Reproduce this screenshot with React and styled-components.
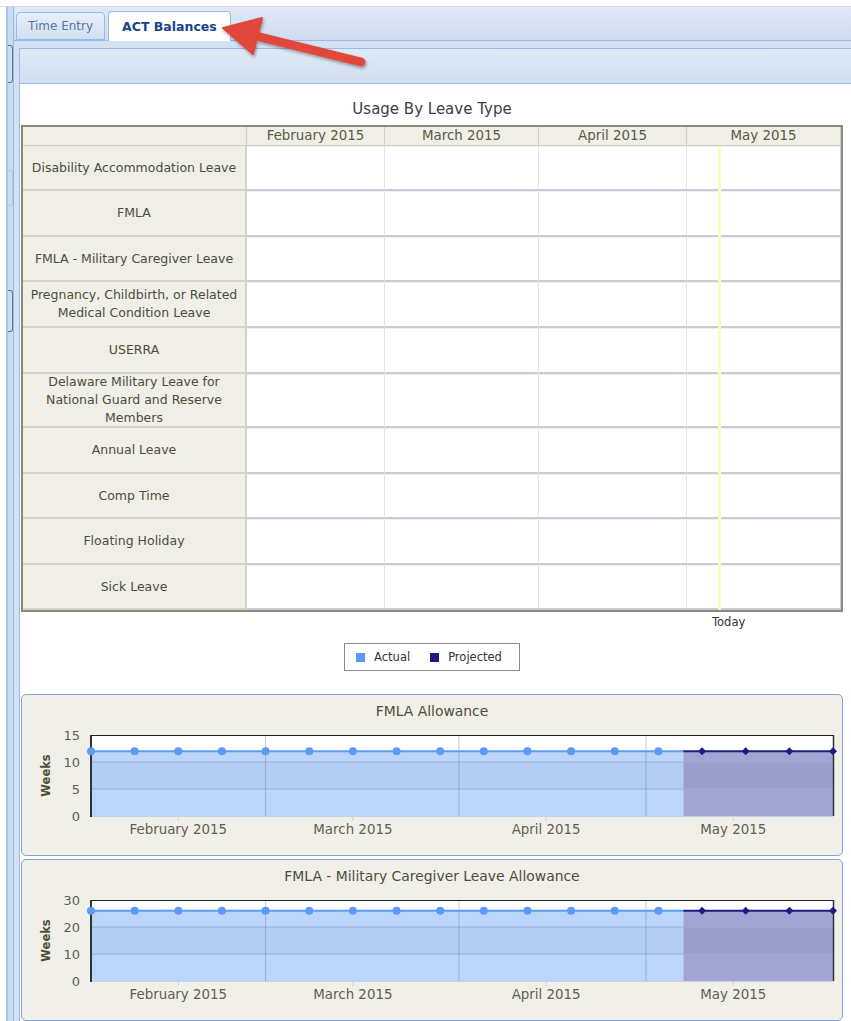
import React from 'react';
import styled, { createGlobalStyle } from 'styled-components';

const GlobalStyle = createGlobalStyle`
  html, body {
    margin: 0;
    padding: 0;
    background: #fff;
  }
  body {
    font-family: "DejaVu Sans", Verdana, sans-serif;
    color: #4d4d3a;
  }
`;

const Page = styled.div`
  position: relative;
  width: 851px;
  height: 1021px;
  overflow: hidden;
`;

const Frame = styled.div`
  display: flex;
  margin-top: 6px;
  border-top: 1px solid #d6d6d6;
  height: 1014px;
`;

const SideRail = styled.div`
  flex: none;
  width: 14px;
  display: flex;
  flex-direction: column;
  background: linear-gradient(
    to right,
    #fff 0 6px,
    #a9c4e8 6px 8px,
    #c9dcf3 8px 13px,
    #99bbe8 13px 14px
  );
`;

const Handle = styled.div`
  flex: none;
  margin-top: ${p => p.$gap}px;
  height: ${p => p.$size}px;
  width: 4px;
  margin-left: 8px;
  border: 1px solid ${p => (p.$faint ? '#b7c6d8' : '#6d7480')};
  border-left: none;
  border-radius: 0 3px 3px 0;
`;

const TabPanel = styled.div`
  flex: 1;
  display: flex;
  flex-direction: column;
  background: #d3e1f3;
  min-width: 0;
`;

const TabStrip = styled.div`
  height: 33px;
  display: flex;
  align-items: flex-end;
  gap: 3px;
  padding-left: 2px;
  background: linear-gradient(#dfe8f6, #cfdcef);
  border-bottom: 1px solid #99bbe8;
`;

const Tab = styled.div`
  height: ${p => (p.$active ? 30 : 28)}px;
  margin-bottom: ${p => (p.$active ? -1 : 0)}px;
  box-sizing: border-box;
  padding: 0 ${p => (p.$active ? 13 : 11)}px;
  display: flex;
  align-items: center;
  border: 1px solid #99bbe8;
  border-bottom: ${p => (p.$active ? 'none' : '1px solid #99bbe8')};
  border-radius: 4px 4px 0 0;
  background: ${p => (p.$active ? '#fff' : 'linear-gradient(#e6eef9, #d3e0f2)')};
  color: ${p => (p.$active ? '#15428b' : '#5a76a0')};
  font-size: ${p => (p.$active ? 12.5 : 12)}px;
  font-weight: ${p => (p.$active ? 700 : 400)};
  white-space: nowrap;
`;

const Body = styled.div`
  flex: 1;
  margin: 7px 0 0 5px;
  border-top: 1px solid #99bbe8;
  border-left: 1px solid #99bbe8;
  display: flex;
  flex-direction: column;
  min-height: 0;
`;

const Toolbar = styled.div`
  height: 34px;
  flex: none;
  background: linear-gradient(#dfe9f6, #d0def0);
  border-bottom: 1px solid #99bbe8;
`;

const Content = styled.div`
  flex: 1;
  background: #fff;
  padding: 0 8px 0 1px;
`;

const SectionTitle = styled.div`
  height: 41px;
  box-sizing: border-box;
  padding-top: 15px;
  line-height: 20px;
  text-align: center;
  font-size: 15px;
  color: #404040;
`;

const Table = styled.div`
  position: relative;
  display: grid;
  grid-template-columns: 224px 138px 154px 148px 154px;
  border: 2px solid #8b8b7b;
  font-size: 12.5px;
`;

const HeadCell = styled.div`
  height: 19px;
  box-sizing: border-box;
  line-height: 18px;
  text-align: center;
  background: #efefe8;
  border-right: 1px solid #cdcdc2;
  border-bottom: 1px solid #cdcdc2;
  font-size: 13.4px;
  color: #5a5a44;
  &:last-child { border-right: none; }
`;

const LabelCell = styled.div`
  height: ${p => p.$h}px;
  box-sizing: border-box;
  padding: 0 4px;
  display: flex;
  align-items: center;
  justify-content: center;
  text-align: center;
  line-height: 18px;
  background: #efefe8;
  border-right: 2px solid #d2d2c9;
  border-bottom: 2px solid #d2d2c9;
  color: #4d4d3a;
`;

const DataCell = styled.div`
  height: ${p => p.$h}px;
  box-sizing: border-box;
  background: #fff;
  border-top: 1px solid #f0f0f0;
  border-right: ${p => (p.$last ? '1px solid #c8cfd9' : '1px solid #e2e2e2')};
  border-bottom: 2px solid #c6cdd8;
`;

const TodayLine = styled.div`
  position: absolute;
  left: 695px;
  top: 19px;
  bottom: 0;
  width: 3px;
  background: #fbfbc4;
`;

const TodayLabel = styled.div`
  height: 22px;
  padding-left: 691px;
  line-height: 20px;
  font-size: 11.5px;
  color: #333;
`;

const LegendRow = styled.div`
  display: flex;
  justify-content: center;
  margin-top: 9px;
`;

const Legend = styled.div`
  display: flex;
  align-items: center;
  gap: 20px;
  height: 28px;
  box-sizing: border-box;
  padding: 0 17px 0 11px;
  border: 1px solid #8e8e80;
  font-size: 11.5px;
  color: #333;
`;

const LegendItem = styled.div`
  display: flex;
  align-items: center;
  gap: 9px;
`;

const Swatch = styled.span`
  width: 9px;
  height: 9px;
  background: ${p => p.$color};
`;

const Charts = styled.div`
  display: flex;
  flex-direction: column;
  gap: 3px;
  margin-top: 23px;
`;

const ChartPanel = styled.div`
  width: 822px;
  height: 162px;
  box-sizing: border-box;
  border: 1px solid #7fa4d5;
  border-radius: 5px;
  background: #f0f0e9;
  overflow: hidden;
`;

const ChartTitle = styled.div`
  height: 27px;
  box-sizing: border-box;
  padding-top: 6px;
  line-height: 21px;
  text-align: center;
  font-size: 13.9px;
  color: #4d4d3a;
`;

const ArrowLayer = styled.svg`
  position: absolute;
  left: 0;
  top: 0;
  pointer-events: none;
`;

const months = ['February 2015', 'March 2015', 'April 2015', 'May 2015'];

const leaveTypes = [
  { label: 'Disability Accommodation Leave', h: 45 },
  { label: 'FMLA', h: 46 },
  { label: 'FMLA - Military Caregiver Leave', h: 45 },
  { label: 'Pregnancy, Childbirth, or Related Medical Condition Leave', h: 46 },
  { label: 'USERRA', h: 46 },
  { label: 'Delaware Military Leave for National Guard and Reserve Members', h: 54 },
  { label: 'Annual Leave', h: 46 },
  { label: 'Comp Time', h: 45 },
  { label: 'Floating Holiday', h: 46 },
  { label: 'Sick Leave', h: 45 },
];

const ACTUAL = '#5b9bf8';
const PROJECTED = '#1c1c84';

// Feb 1 .. May 31, 2015 as day offsets
const LAST_DAY = 119;
const TODAY = 95;
const MONTH_STARTS = [28, 59, 89];
const MONTH_MIDS = [14, 42, 73, 103];

function AllowanceChart({ title, max, step, value }) {
  const X0 = 69;
  const X1 = 811;
  const TOP = 13;
  const BOTTOM = 94;
  const xOf = d => X0 + (d * (X1 - X0)) / LAST_DAY;
  const yOf = v => BOTTOM - (v * (BOTTOM - TOP)) / max;
  const ticks = [];
  for (let v = 0; v <= max; v += step) ticks.push(v);
  const weeks = [];
  for (let d = 0; d <= LAST_DAY; d += 7) weeks.push(d);
  const xToday = xOf(TODAY);
  const yVal = yOf(value);

  return (
    <ChartPanel>
      <ChartTitle>{title}</ChartTitle>
      <svg width="820" height="133" style={{ display: 'block' }}>
        <rect x={X0} y={TOP} width={X1 - X0} height={BOTTOM - TOP} fill="#fff" />
        <rect x={X0} y={yVal} width={xToday - X0} height={BOTTOM - yVal} fill="#bcd5fb" />
        <rect x={xToday} y={yVal} width={X1 - xToday} height={BOTTOM - yVal} fill="#a2a4d3" />
        <rect
          x={X0}
          y={yOf(step * 2)}
          width={X1 - X0}
          height={yOf(step) - yOf(step * 2)}
          fill="rgba(40, 50, 70, 0.05)"
        />
        {ticks.slice(1, -1).map(v => (
          <line key={v} x1={X0} x2={X1} y1={yOf(v)} y2={yOf(v)} stroke="#98afd6" strokeWidth="1" />
        ))}
        {MONTH_STARTS.map(d => (
          <line key={d} x1={xOf(d)} x2={xOf(d)} y1={TOP} y2={BOTTOM} stroke="rgba(90, 110, 150, 0.35)" strokeWidth="1" />
        ))}
        <line x1={X0} x2={X1} y1={BOTTOM + 0.5} y2={BOTTOM + 0.5} stroke="#c4d3e6" />
        {MONTH_MIDS.map(d => (
          <line key={d} x1={xOf(d)} x2={xOf(d)} y1={BOTTOM} y2={BOTTOM + 5} stroke="#c4d3e6" />
        ))}
        <line x1={X0} x2={X1} y1={TOP + 0.5} y2={TOP + 0.5} stroke="#222" />
        <line x1={X1 + 0.5} x2={X1 + 0.5} y1={TOP} y2={BOTTOM} stroke="#333" strokeWidth="1.5" />
        <line x1={X0} x2={X0} y1={TOP} y2={BOTTOM + 1} stroke="#333" strokeWidth="2" />
        <line x1={X0} x2={xToday} y1={yVal} y2={yVal} stroke={ACTUAL} strokeWidth="2" />
        <line x1={xToday} x2={X1} y1={yVal} y2={yVal} stroke={PROJECTED} strokeWidth="2" />
        {weeks.map(d =>
          d < TODAY ? (
            <circle key={d} cx={xOf(d)} cy={yVal} r="4" fill={ACTUAL} />
          ) : (
            <path
              key={d}
              d={`M${xOf(d)} ${yVal - 4}L${xOf(d) + 4} ${yVal}L${xOf(d)} ${yVal + 4}L${xOf(d) - 4} ${yVal}Z`}
              fill={PROJECTED}
            />
          )
        )}
        {ticks.map(v => (
          <text
            key={v}
            x="58"
            y={yOf(v) + 5}
            textAnchor="end"
            fontSize="13"
            fill="#5e5e52"
            fontFamily="DejaVu Sans, sans-serif"
          >
            {v}
          </text>
        ))}
        <text
          transform={`translate(28 ${(TOP + BOTTOM) / 2}) rotate(-90)`}
          textAnchor="middle"
          fontSize="11.5"
          fontWeight="700"
          fill="#4d4d3a"
          fontFamily="DejaVu Sans, sans-serif"
        >
          Weeks
        </text>
        {months.map((m, i) => (
          <text
            key={m}
            x={xOf(MONTH_MIDS[i])}
            y={BOTTOM + 18}
            textAnchor="middle"
            fontSize="13.4"
            fill="#5e5e52"
            fontFamily="DejaVu Sans, sans-serif"
          >
            {m}
          </text>
        ))}
      </svg>
    </ChartPanel>
  );
}

export default function App() {
  return (
    <Page>
      <GlobalStyle />
      <Frame>
        <SideRail>
          <Handle $gap={38} $size={36} />
          <Handle $gap={87} $size={34} $faint />
          <Handle $gap={84} $size={40} />
        </SideRail>
        <TabPanel>
          <TabStrip>
            <Tab>Time Entry</Tab>
            <Tab $active>ACT Balances</Tab>
          </TabStrip>
          <Body>
            <Toolbar />
            <Content>
              <SectionTitle>Usage By Leave Type</SectionTitle>
              <Table>
                <HeadCell />
                {months.map(m => (
                  <HeadCell key={m}>{m}</HeadCell>
                ))}
                {leaveTypes.map(row => (
                  <React.Fragment key={row.label}>
                    <LabelCell $h={row.h}>{row.label}</LabelCell>
                    {months.map((m, i) => (
                      <DataCell key={m} $h={row.h} $last={i === months.length - 1} />
                    ))}
                  </React.Fragment>
                ))}
                <TodayLine />
              </Table>
              <TodayLabel>Today</TodayLabel>
              <LegendRow>
                <Legend>
                  <LegendItem>
                    <Swatch $color={ACTUAL} />
                    Actual
                  </LegendItem>
                  <LegendItem>
                    <Swatch $color={PROJECTED} />
                    Projected
                  </LegendItem>
                </Legend>
              </LegendRow>
              <Charts>
                <AllowanceChart title="FMLA Allowance" max={15} step={5} value={12} />
                <AllowanceChart
                  title="FMLA - Military Caregiver Leave Allowance"
                  max={30}
                  step={10}
                  value={26}
                />
              </Charts>
            </Content>
          </Body>
        </TabPanel>
      </Frame>
      <ArrowLayer width="851" height="100">
        <defs>
          <filter id="arrowShadow" x="-20%" y="-40%" width="140%" height="180%">
            <feDropShadow dx="1" dy="2" stdDeviation="1.5" floodColor="#000" floodOpacity="0.35" />
          </filter>
        </defs>
        <g filter="url(#arrowShadow)" fill="#e2463b" stroke="#e2463b">
          <line x1="361" y1="62" x2="252" y2="35" strokeWidth="9" strokeLinecap="round" />
          <path d="M223 28 L262 18 L253 54 Z" strokeWidth="2" strokeLinejoin="round" />
        </g>
      </ArrowLayer>
    </Page>
  );
}
